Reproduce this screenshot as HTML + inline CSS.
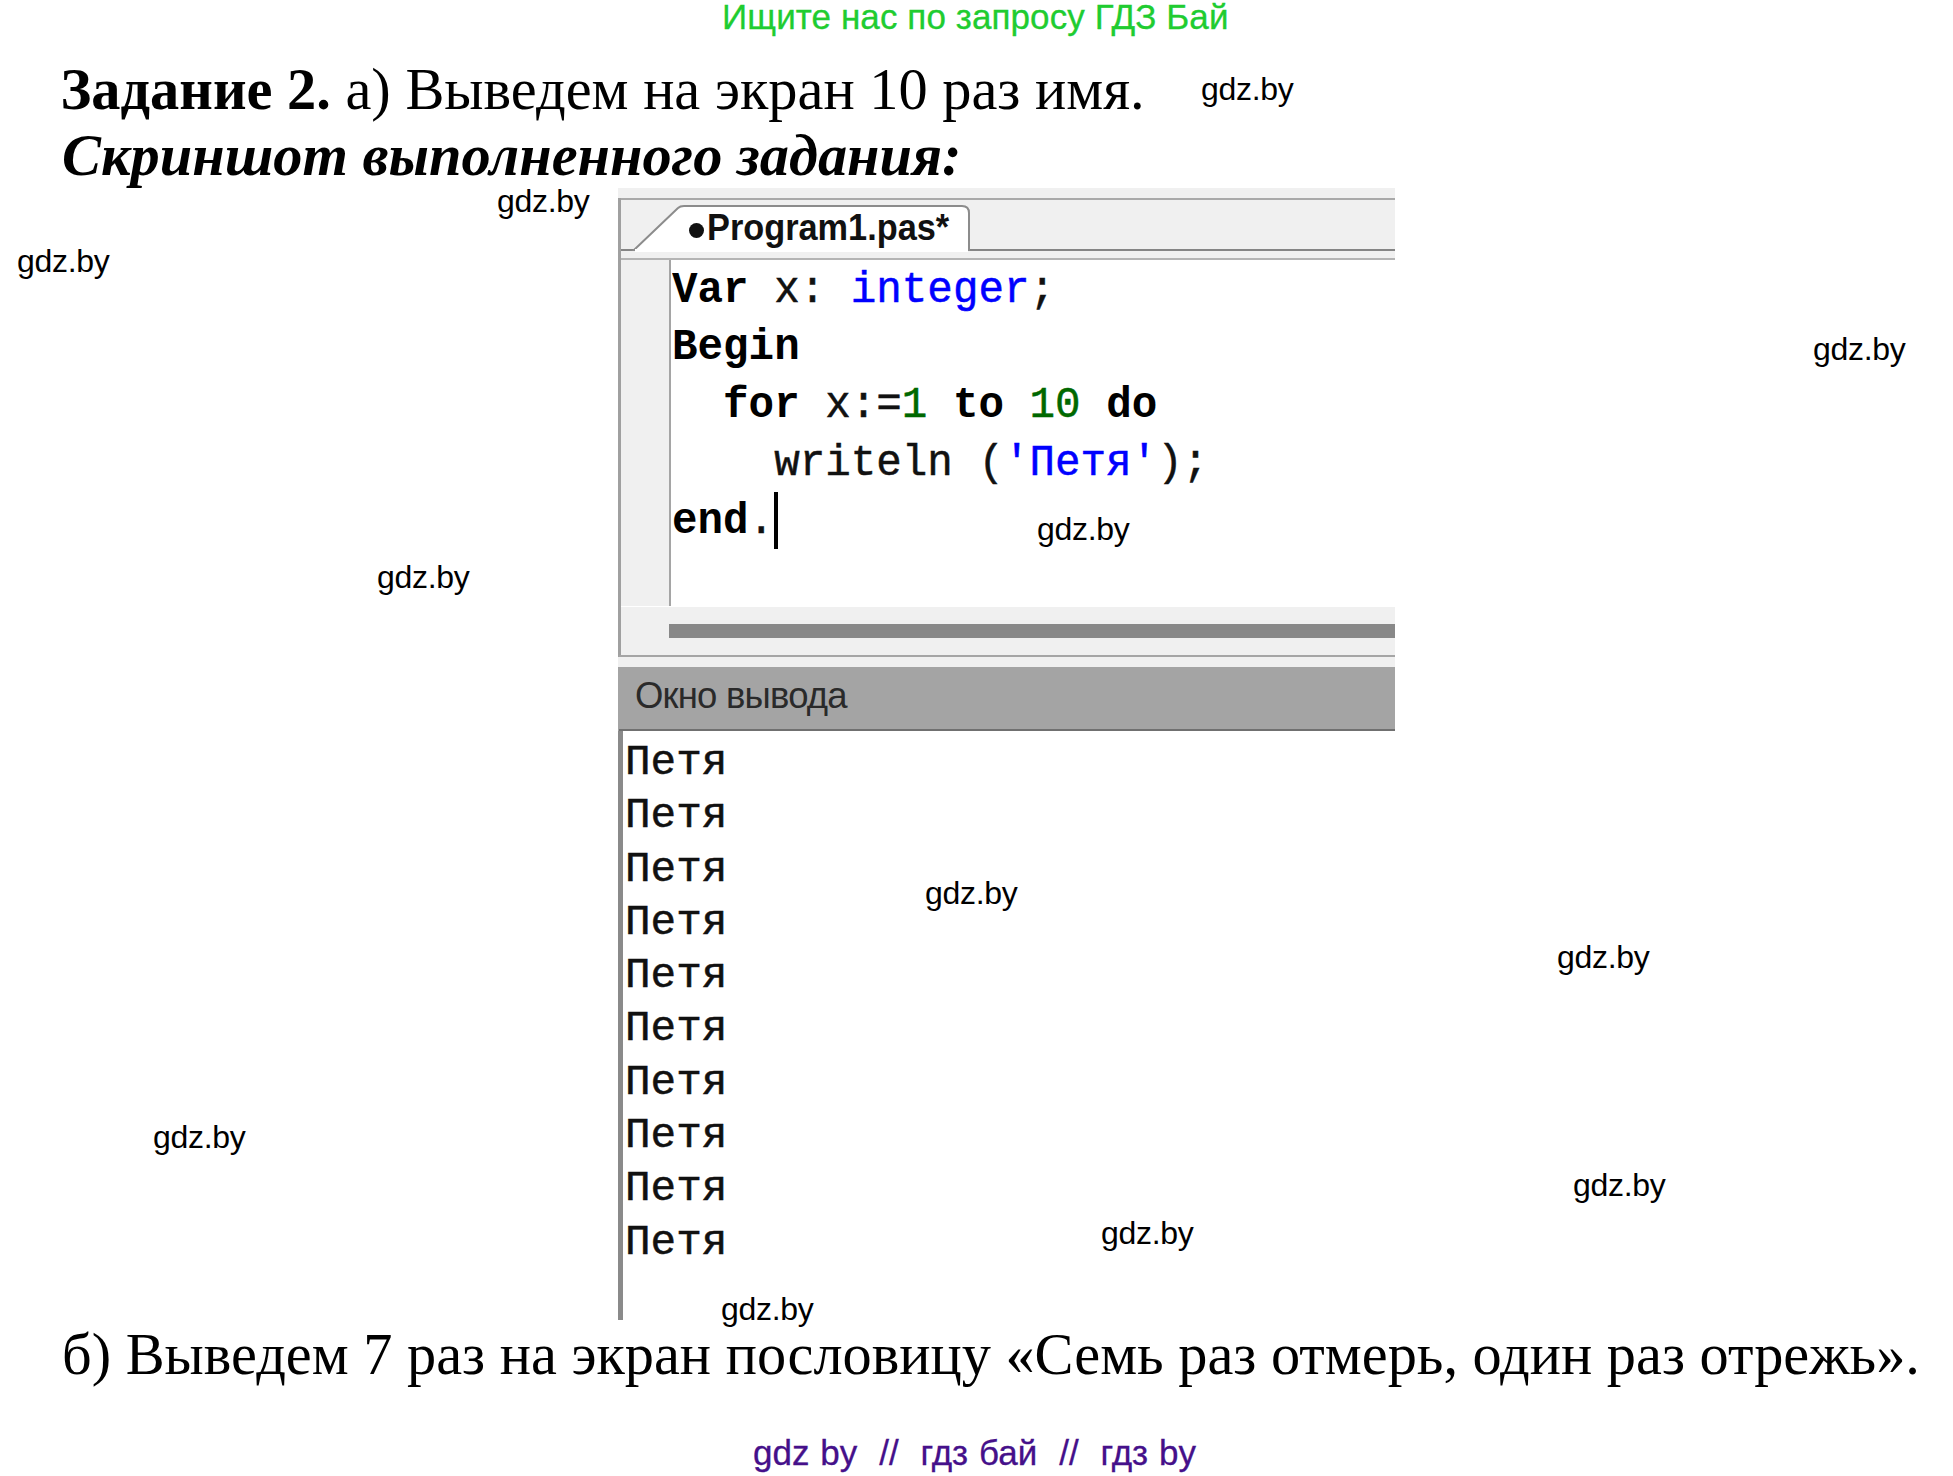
<!DOCTYPE html>
<html><head><meta charset="utf-8">
<style>
html,body{margin:0;padding:0;background:#fff;}
body{width:1953px;height:1476px;position:relative;overflow:hidden;font-family:"Liberation Sans",sans-serif;}
.abs{position:absolute;white-space:nowrap;line-height:1;}
.wm{position:absolute;white-space:nowrap;line-height:1;font-size:32px;letter-spacing:-0.3px;color:#000;font-family:"Liberation Sans",sans-serif;}
.ser{font-family:"Liberation Serif",serif;color:#000;}
.mono{font-family:"Liberation Mono",monospace;}
.box{position:absolute;}
.code{position:absolute;white-space:pre;line-height:1;font-family:"Liberation Mono",monospace;font-size:42.55px;color:#111;left:672px;transform:scaleY(1.035);transform-origin:0 0;-webkit-text-stroke:0.5px currentColor;}
.code b{color:#000;-webkit-text-stroke:0;}
.bl{color:#0000ff;}
.gr{color:#006800;}
.out{position:absolute;white-space:pre;line-height:1;font-family:"Liberation Mono",monospace;font-size:42.7px;color:#111;left:625px;-webkit-text-stroke:0.5px #111;}
</style></head><body>
<div class="abs" id="top" style="left:722px;top:-1px;font-size:35px;letter-spacing:0.1px;color:#20cc30;-webkit-text-stroke:0.3px #20cc30;">Ищите нас по запросу ГДЗ Бай</div>
<div class="abs ser" id="h1" style="left:60.5px;top:60.6px;font-size:58.4px;"><b>Задание 2.</b> а) Выведем на экран 10 раз имя.</div>
<div class="abs ser" id="h2" style="left:62px;top:127px;font-size:58.4px;font-weight:bold;font-style:italic;">Скриншот выполненного задания:</div>

<!-- IDE screenshot -->
<div class="box" id="ide" style="left:619px;top:188px;width:776px;height:1132px;overflow:hidden;">
  <div class="box" style="left:0;top:0;width:776px;height:72px;background:#f0f0f0;"></div>
  <div class="box" style="left:0;top:10px;width:776px;height:2px;background:#a9a9a9;"></div>
  <div class="box" style="left:0;top:61px;width:776px;height:2px;background:#858585;"></div>
  <div class="box" style="left:0;top:70px;width:776px;height:2px;background:#b4b4b4;"></div>
  <!-- tab -->
  <svg class="box" style="left:0;top:0;" width="776" height="72" viewBox="0 0 776 72">
    <path d="M15 62 L59 20 Q61 18 65 18 L343 18 Q350 18 350 25 L350 62 Z" fill="#fff" stroke="#8c8c8c" stroke-width="2"/>
    <rect x="16" y="61" width="333" height="3" fill="#fff"/>
  </svg>
  <div class="box" style="left:69.5px;top:34.7px;width:15px;height:15px;border-radius:50%;background:#111;"></div>
  <div class="abs" id="tab" style="left:88px;top:21.5px;font-size:36.5px;font-weight:bold;color:#111;transform:scaleX(0.94);transform-origin:0 0;">Program1.pas*</div>
  <!-- editor -->
  <div class="box" style="left:0;top:72px;width:776px;height:346px;background:#fff;"></div>
  <div class="box" style="left:0;top:72px;width:50px;height:346px;background:#f0f0f0;"></div>
  <div class="box" style="left:50px;top:72px;width:2px;height:346px;background:#a5a5a5;"></div>
  <div class="box" style="left:0;top:10px;width:1.6px;height:459px;background:#a0a0a0;"></div>
  <!-- scrollbar -->
  <div class="box" style="left:2px;top:419px;width:774px;height:48px;background:#f0f0f0;"></div>
  <div class="box" style="left:50px;top:436px;width:726px;height:14px;background:#888;"></div>
  <div class="box" style="left:0;top:467px;width:776px;height:2px;background:#a5a5a5;"></div>
  <div class="box" style="left:0;top:469px;width:776px;height:10px;background:#f0f0f0;"></div>
  <!-- output header -->
  <div class="box" style="left:0;top:479px;width:776px;height:62px;background:#a4a4a4;"></div>
  <div class="box" style="left:0;top:540.5px;width:776px;height:2px;background:#707070;"></div>
  <div class="abs" id="okno" style="left:16px;top:490px;font-size:36.5px;letter-spacing:-0.8px;color:#2a2a2a;">Окно вывода</div>
  <!-- output -->
  <div class="box" style="left:0;top:543px;width:3.5px;height:589px;background:#8a8a8a;"></div>
</div>
<div class="box" style="left:618px;top:188px;width:1px;height:10px;background:#f0f0f0;"></div>
<div class="box" style="left:618px;top:198px;width:1px;height:459px;background:#a0a0a0;"></div>
<div class="box" style="left:618px;top:657px;width:1px;height:10px;background:#f0f0f0;"></div>
<div class="box" style="left:618px;top:667px;width:1px;height:64px;background:#a4a4a4;"></div>
<div class="box" style="left:618px;top:731px;width:1px;height:589px;background:#8a8a8a;"></div>
<div class="code" id="c1" style="top:268.5px;"><b>Var</b> x: <span class="bl">integer</span>;</div>
<div class="code" id="c2" style="top:326.4px;"><b>Begin</b></div>
<div class="code" id="c3" style="top:384.3px;">  <b>for</b> x:=<span class="gr">1</span> <b>to</b> <span class="gr">10</span> <b>do</b></div>
<div class="code" id="c4" style="top:442.2px;">    writeln (<span class="bl">'Петя'</span>);</div>
<div class="code" id="c5" style="top:500.1px;"><b>end</b>.</div>
<div class="box" id="caret" style="left:773.5px;top:491.5px;width:4.5px;height:57.5px;background:#000;"></div>

<div class="out" id="o1" style="top:741.9px;">Петя</div>
<div class="out" id="o2" style="top:795.2px;">Петя</div>
<div class="out" id="o3" style="top:848.5px;">Петя</div>
<div class="out" id="o4" style="top:901.8px;">Петя</div>
<div class="out" id="o5" style="top:955.1px;">Петя</div>
<div class="out" id="o6" style="top:1008.4px;">Петя</div>
<div class="out" id="o7" style="top:1061.7px;">Петя</div>
<div class="out" id="o8" style="top:1115.0px;">Петя</div>
<div class="out" id="o9" style="top:1168.3px;">Петя</div>
<div class="out" id="o10" style="top:1221.6px;">Петя</div>

<div class="abs ser" id="h3" style="left:62px;top:1326.4px;font-size:58.35px;">б) Выведем 7 раз на экран пословицу «Семь раз отмерь, один раз отрежь».</div>
<div class="abs" id="foot" style="left:753px;top:1434.7px;font-size:35px;word-spacing:1.2px;color:#45108a;-webkit-text-stroke:0.3px #45108a;">gdz by&nbsp; //&nbsp; гдз бай&nbsp; //&nbsp; гдз by</div>

<!-- watermarks -->
<div class="wm" id="w1" style="left:1201px;top:72.9px;">gdz.by</div>
<div class="wm" id="w2" style="left:497px;top:184.9px;">gdz.by</div>
<div class="wm" id="w3" style="left:17px;top:244.9px;">gdz.by</div>
<div class="wm" id="w4" style="left:1813px;top:332.9px;">gdz.by</div>
<div class="wm" id="w5" style="left:1037px;top:512.9px;">gdz.by</div>
<div class="wm" id="w6" style="left:377px;top:560.9px;">gdz.by</div>
<div class="wm" id="w7" style="left:925px;top:876.9px;">gdz.by</div>
<div class="wm" id="w8" style="left:1557px;top:940.9px;">gdz.by</div>
<div class="wm" id="w9" style="left:153px;top:1120.9px;">gdz.by</div>
<div class="wm" id="w10" style="left:1573px;top:1168.9px;">gdz.by</div>
<div class="wm" id="w11" style="left:1101px;top:1216.9px;">gdz.by</div>
<div class="wm" id="w12" style="left:721px;top:1292.9px;">gdz.by</div>
</body></html>
